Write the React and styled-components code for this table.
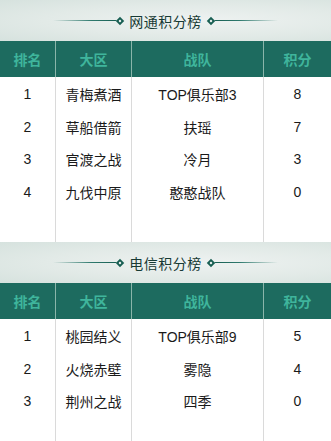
import React from "react";
import styled, { createGlobalStyle } from "styled-components";

const Global = createGlobalStyle`
  html, body {
    margin: 0;
    padding: 0;
    background: #fff;
  }
  body {
    font-family: "Liberation Sans", "Noto Sans CJK SC", sans-serif;
    color: #222;
  }
`;

const Page = styled.div`
  width: 331px;
  display: flex;
  flex-direction: column;
`;

const Banner = styled.div`
  height: 41px;
  display: flex;
  align-items: center;
  justify-content: center;
  gap: 6px;
  background: radial-gradient(ellipse at 60% 50%, #eef2f1 0%, #e2eae7 55%, #d6e2de 100%);
`;

const Rule = styled.span`
  display: flex;
  align-items: center;
  width: 70px;
  height: 8px;
  flex-direction: ${(p) => (p.$right ? "row" : "row-reverse")};

  &::before {
    content: "";
    width: 6px;
    height: 6px;
    box-sizing: border-box;
    border: 2px solid #175e52;
    background: #fff;
    transform: rotate(45deg);
    flex: none;
  }
  &::after {
    content: "";
    flex: 1;
    height: 1px;
    background: linear-gradient(
      ${(p) => (p.$right ? "to right" : "to left")},
      #175e52 0%,
      #2f7a6e 40%,
      rgba(47, 122, 110, 0) 100%
    );
  }
`;

const Title = styled.h2`
  margin: 0;
  font-size: 14px;
  font-weight: normal;
  color: #173a34;
  letter-spacing: 0.5px;
`;

const Grid = styled.div`
  display: grid;
  grid-template-columns: 55px 76px 132px 68px;
`;

const HeadCell = styled.div`
  height: 36px;
  display: flex;
  align-items: center;
  justify-content: center;
  background: #1d6b5f;
  color: #3fb59c;
  font-weight: bold;
  font-size: 14px;
  border-left: ${(p) => (p.$first ? "none" : "1px solid #8ab5aa")};
`;

const Column = styled.div`
  display: flex;
  flex-direction: column;
  padding-top: 1px;
  height: ${(p) => p.$h}px;
  box-sizing: border-box;
  border-left: ${(p) => (p.$first ? "none" : "1px solid #dadada")};
`;

const Cell = styled.div`
  height: 32.5px;
  display: flex;
  align-items: center;
  justify-content: center;
  font-size: 14px;
  color: #1a1a1a;
`;

const Board = ({ title, rows, bodyHeight }) => {
  const cols = [
    { head: "排名", key: 0 },
    { head: "大区", key: 1 },
    { head: "战队", key: 2 },
    { head: "积分", key: 3 },
  ];
  return (
    <section>
      <Banner>
        <Rule />
        <Title>{title}</Title>
        <Rule $right />
      </Banner>
      <Grid>
        {cols.map((c) => (
          <HeadCell key={c.key} $first={c.key === 0}>
            {c.head}
          </HeadCell>
        ))}
        {cols.map((c) => (
          <Column key={c.key} $first={c.key === 0} $h={bodyHeight}>
            {rows.map((r, i) => (
              <Cell key={i}>{r[c.key]}</Cell>
            ))}
          </Column>
        ))}
      </Grid>
    </section>
  );
};

const wangtong = [
  ["1", "青梅煮酒", "TOP俱乐部3", "8"],
  ["2", "草船借箭", "扶瑶", "7"],
  ["3", "官渡之战", "冷月", "3"],
  ["4", "九伐中原", "憨憨战队", "0"],
];

const dianxin = [
  ["1", "桃园结义", "TOP俱乐部9", "5"],
  ["2", "火烧赤壁", "雾隐", "4"],
  ["3", "荆州之战", "四季", "0"],
];

export default function App() {
  return (
    <Page>
      <Global />
      <Board title="网通积分榜" rows={wangtong} bodyHeight={165} />
      <Board title="电信积分榜" rows={dianxin} bodyHeight={123} />
    </Page>
  );
}
